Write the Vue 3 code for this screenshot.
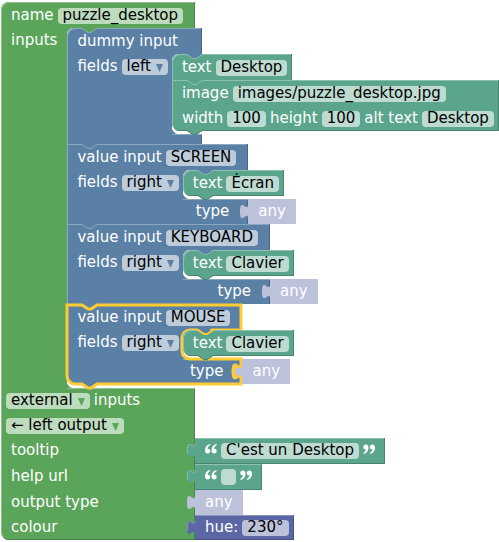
<script setup>
import { computed, onMounted, reactive, ref } from 'vue'

const blockName = ref('puzzle_desktop')
const inputsMode = ref('external')
const outputMode = ref('← left output')
const tooltip = ref("C'est un Desktop")
const helpUrl = ref('')
const hue = ref('230°')

const inputs = reactive([
  {
    kind: 'dummy input', name: null, align: 'left', selected: false,
    fields: [
      { kind: 'text', value: 'Desktop' },
      { kind: 'image', src: 'images/puzzle_desktop.jpg', width: '100', height: '100', alt: 'Desktop' },
    ],
  },
  { kind: 'value input', name: 'SCREEN', align: 'right', selected: false, fields: [{ kind: 'text', value: 'Écran' }] },
  { kind: 'value input', name: 'KEYBOARD', align: 'right', selected: false, fields: [{ kind: 'text', value: 'Clavier' }] },
  { kind: 'value input', name: 'MOUSE', align: 'right', selected: true, fields: [{ kind: 'text', value: 'Clavier' }] },
])

// Size of the selected block, from which its outline is traced.
const stack = ref(null)
const size = reactive({ w: 174, h: 80, slotX: 116, slotEnd: 55 })
onMounted(() => {
  const el = stack.value.querySelector('.selected')
  if (!el) return
  const side = el.querySelector('.side')
  size.w = el.offsetWidth
  size.h = el.offsetHeight
  size.slotX = side.offsetWidth
  size.slotEnd = side.offsetTop + side.offsetHeight
})
const outline = computed(() => {
  const { w, h, slotX: s, slotEnd: e } = size
  return `M0 1 H15 l6 4 h3 l6 -4 H${w - 1} V26 H${s + 30} l-6 4 h-3 l-6 -4 H${s + 8}`
    + ` a8 8 0 0 0 -8 8 V${e - 8} a8 8 0 0 0 8 8 H${w - 1} v5 c0 10 -8 -8 -8 7.5 s8 -2.5 8 7.5`
    + ` V${h} H30 l-6 4 h-3 l-6 -4 H8 a8 8 0 0 1 -8 -8 z`
})
</script>

<template>
  <main class="workspace">
    <section class="block root green">
      <div class="part top">
        <div class="row first">
          <label for="name">name</label>
          <span class="field"><input id="name" v-model="blockName" type="text"></span>
        </div>
      </div>

      <div class="middle">
        <div class="side">
          <div class="row"><span>inputs</span></div>
        </div>
        <div class="slot">
          <div ref="stack" class="stack">
            <section
              v-for="(input, i) in inputs" :key="i"
              class="block blue" :class="{ selected: input.selected }"
            >
              <svg class="notch" :class="i ? 'in-blue' : 'in-green'" width="17" height="6" viewBox="-1 0 17 6" aria-hidden="true">
                <path class="fill" d="M-1 0 H16 V1 H15 L9 5 H6 L0 1 H-1 z" />
                <path class="edge" d="M-1 .5 H0 L6 4.5 H9 L15 .5 H16" />
              </svg>
              <div class="part top">
                <div class="row first">
                  <label :for="input.name ? 'input' + i : 'align' + i">{{ input.kind }}</label>
                  <span v-if="input.name" class="field"><input :id="'input' + i" v-model="input.name" type="text"></span>
                </div>
              </div>
              <div class="middle">
                <div class="side">
                  <div class="row">
                    <label :for="'align' + i">fields</label>
                    <span class="field drop">
                      <select :id="'align' + i" v-model="input.align">
                        <option>{{ input.align }}</option>
                      </select>
                      <svg width="7" height="8" viewBox="0 0 7 8" aria-hidden="true"><path d="M0 0 H7 L3.5 8 z" /></svg>
                    </span>
                  </div>
                </div>
                <div class="slot">
                  <div class="stack">
                    <section v-for="(f, j) in input.fields" :key="j" class="block teal">
                      <svg class="notch" :class="j ? 'in-teal' : 'in-blue'" width="17" height="6" viewBox="-1 0 17 6" aria-hidden="true">
                        <path class="fill" d="M-1 0 H16 V1 H15 L9 5 H6 L0 1 H-1 z" />
                        <path v-if="input.selected" class="edge picked" d="M-1 0 H0 L6 4 H9 L15 0 H16" />
                        <path v-else class="edge" d="M-1 .5 H0 L6 4.5 H9 L15 .5 H16" />
                      </svg>
                      <div class="part leaf">
                        <div v-if="f.kind === 'text'" class="row first">
                          <label :for="`f${i}-${j}`">text</label>
                          <span class="field"><input :id="`f${i}-${j}`" v-model="f.value" type="text"></span>
                        </div>
                        <template v-else>
                          <div class="row first">
                            <label :for="`src${i}`">image</label>
                            <span class="field"><input :id="`src${i}`" v-model="f.src" type="text"></span>
                          </div>
                          <div class="row">
                            <label :for="`w${i}`">width</label>
                            <span class="field"><input :id="`w${i}`" v-model="f.width" type="text"></span>
                            <label :for="`h${i}`">height</label>
                            <span class="field"><input :id="`h${i}`" v-model="f.height" type="text"></span>
                            <label :for="`alt${i}`">alt text</label>
                            <span class="field"><input :id="`alt${i}`" v-model="f.alt" type="text"></span>
                          </div>
                        </template>
                      </div>
                      <svg v-if="j === input.fields.length - 1" class="bump" width="15" height="5" viewBox="0 0 15 5" aria-hidden="true">
                        <path class="fill" d="M0 -1 H15 V0 L9 4 H6 L0 0 z" />
                        <path class="edge" d="M0 -.5 L6 3.5 H9 L15 -.5" />
                      </svg>
                    </section>
                  </div>
                </div>
              </div>
              <div v-if="input.name" class="part type">
                <div class="row"><span>type</span></div>
                <div class="attach">
                  <div class="value any">
                    <svg class="tab" width="9" height="17" viewBox="-8 4 9 17" aria-hidden="true">
                      <path class="fill" d="M1 5 H0 c0 10 -8 -8 -8 7.5 s8 -2.5 8 7.5 H1 z" />
                      <path v-if="input.selected" class="edge picked" d="M-1 7 c-1 3 -7 -3 -7 5.500 c0 7 3 4 5 4.500" />
                    </svg>
                    <span>any</span>
                  </div>
                </div>
              </div>
              <div v-else class="part filler"></div>
              <svg v-if="i === inputs.length - 1" class="bump" width="15" height="5" viewBox="0 0 15 5" aria-hidden="true">
                <path class="fill" d="M0 0 H15 L9 4 H6 z" />
              </svg>
              <svg v-if="input.selected" class="outline" width="1" height="1" aria-hidden="true">
                <path :d="outline" />
              </svg>
            </section>
          </div>
        </div>
      </div>

      <div class="part last">
        <div class="row snug">
          <span class="field drop">
            <select id="mode" v-model="inputsMode"><option>{{ inputsMode }}</option></select>
            <svg width="7" height="8" viewBox="0 0 7 8" aria-hidden="true"><path d="M0 0 H7 L3.5 8 z" /></svg>
          </span>
          <label for="mode">inputs</label>
        </div>
        <div class="row snug">
          <span class="field drop">
            <select v-model="outputMode" aria-label="output"><option>{{ outputMode }}</option></select>
            <svg width="7" height="8" viewBox="0 0 7 8" aria-hidden="true"><path d="M0 0 H7 L3.5 8 z" /></svg>
          </span>
        </div>
        <div class="line tall">
          <div class="row"><label for="tooltip">tooltip</label></div>
          <div class="attach">
            <div class="value text teal">
              <svg class="tab" width="9" height="17" viewBox="-8 4 9 17" aria-hidden="true">
                <path class="fill" d="M1 5 H0 c0 10 -8 -8 -8 7.5 s8 -2.5 8 7.5 H1 z" />
                <path class="edge" d="M0 5.5 c0 9 -7.5 -7 -7.5 7 q0 2 .5 3" />
              </svg>
              <svg class="quote" width="12" height="10" viewBox="0 0 12 10" aria-hidden="true">
                <path d="M5 0 C2 .6 0 3 0 6 C0 8.500 1 9.500 2.700 9.500 C4.200 9.500 5.200 8.500 5.200 7.100 C5.200 5.700 4.300 4.800 3 4.800 C2.800 4.800 2.700 4.800 2.500 4.900 C2.700 3.300 3.600 1.800 5.300 1 z" />
                <path transform="translate(6.500 0)" d="M5 0 C2 .6 0 3 0 6 C0 8.500 1 9.500 2.700 9.500 C4.200 9.500 5.200 8.500 5.200 7.100 C5.200 5.700 4.300 4.800 3 4.800 C2.800 4.800 2.700 4.800 2.500 4.900 C2.700 3.300 3.600 1.800 5.300 1 z" />
              </svg>
              <span class="field"><input id="tooltip" v-model="tooltip" type="text"></span>
              <svg class="quote close" width="12" height="10" viewBox="0 0 12 10" aria-hidden="true">
                <path d="M5 0 C2 .6 0 3 0 6 C0 8.500 1 9.500 2.700 9.500 C4.200 9.500 5.200 8.500 5.200 7.100 C5.200 5.700 4.300 4.800 3 4.800 C2.800 4.800 2.700 4.800 2.500 4.900 C2.700 3.300 3.600 1.800 5.300 1 z" />
                <path transform="translate(6.500 0)" d="M5 0 C2 .6 0 3 0 6 C0 8.500 1 9.500 2.700 9.500 C4.200 9.500 5.200 8.500 5.200 7.100 C5.200 5.700 4.300 4.800 3 4.800 C2.800 4.800 2.700 4.800 2.500 4.900 C2.700 3.300 3.600 1.800 5.300 1 z" />
              </svg>
            </div>
          </div>
        </div>
        <div class="line tall">
          <div class="row"><label for="help">help url</label></div>
          <div class="attach">
            <div class="value text teal">
              <svg class="tab" width="9" height="17" viewBox="-8 4 9 17" aria-hidden="true">
                <path class="fill" d="M1 5 H0 c0 10 -8 -8 -8 7.5 s8 -2.5 8 7.5 H1 z" />
                <path class="edge" d="M0 5.5 c0 9 -7.5 -7 -7.5 7 q0 2 .5 3" />
              </svg>
              <svg class="quote" width="12" height="10" viewBox="0 0 12 10" aria-hidden="true">
                <path d="M5 0 C2 .6 0 3 0 6 C0 8.500 1 9.500 2.700 9.500 C4.200 9.500 5.200 8.500 5.200 7.100 C5.200 5.700 4.300 4.800 3 4.800 C2.800 4.800 2.700 4.800 2.500 4.900 C2.700 3.300 3.600 1.800 5.300 1 z" />
                <path transform="translate(6.500 0)" d="M5 0 C2 .6 0 3 0 6 C0 8.500 1 9.500 2.700 9.500 C4.200 9.500 5.200 8.500 5.200 7.100 C5.200 5.700 4.300 4.800 3 4.800 C2.800 4.800 2.700 4.800 2.500 4.900 C2.700 3.300 3.600 1.800 5.300 1 z" />
              </svg>
              <span class="field"><input id="help" v-model="helpUrl" type="text"></span>
              <svg class="quote close" width="12" height="10" viewBox="0 0 12 10" aria-hidden="true">
                <path d="M5 0 C2 .6 0 3 0 6 C0 8.500 1 9.500 2.700 9.500 C4.200 9.500 5.200 8.500 5.200 7.100 C5.200 5.700 4.300 4.800 3 4.800 C2.800 4.800 2.700 4.800 2.500 4.900 C2.700 3.300 3.600 1.800 5.300 1 z" />
                <path transform="translate(6.500 0)" d="M5 0 C2 .6 0 3 0 6 C0 8.500 1 9.500 2.700 9.500 C4.200 9.500 5.200 8.500 5.200 7.100 C5.200 5.700 4.300 4.800 3 4.800 C2.800 4.800 2.700 4.800 2.500 4.900 C2.700 3.300 3.600 1.800 5.300 1 z" />
              </svg>
            </div>
          </div>
        </div>
        <div class="line">
          <div class="row"><span>output type</span></div>
          <div class="attach">
            <div class="value any">
              <svg class="tab" width="9" height="17" viewBox="-8 4 9 17" aria-hidden="true">
                <path class="fill" d="M1 5 H0 c0 10 -8 -8 -8 7.5 s8 -2.5 8 7.5 H1 z" />
              </svg>
              <span>any</span>
            </div>
          </div>
        </div>
        <div class="line">
          <div class="row"><span>colour</span></div>
          <div class="attach">
            <div class="value indigo">
              <svg class="tab" width="9" height="17" viewBox="-8 4 9 17" aria-hidden="true">
                <path class="fill" d="M1 5 H0 c0 10 -8 -8 -8 7.5 s8 -2.5 8 7.5 H1 z" />
                <path class="edge" d="M0 5.5 c0 9 -7.5 -7 -7.5 7 q0 2 .5 3" />
              </svg>
              <label for="hue">hue:</label>
              <span class="field"><input id="hue" v-model="hue" type="text"></span>
            </div>
          </div>
        </div>
      </div>
    </section>
  </main>
</template>

<style>
body {
  background: #fff;
  overflow: hidden;
}
</style>

<style scoped>
.workspace {
  padding: 2px 0 0 1px;
  color: #fff;
  font: 15px/14px "DejaVu Sans", sans-serif;
  white-space: nowrap;
}

.green { --c: #5ba55b; --light: #8cc08c; --dark: #498449; }
.blue { --c: #5b80a5; --light: #8ca6c0; --dark: #496684; }
.teal { --c: #5ba58c; --light: #8cc0af; --dark: #498470; }
.indigo { --c: #5b67a5; --light: #8c95c0; --dark: #495284; }
.any { --c: #bdc2db; --light: #bdc2db; --dark: #bdc2db; }

.block {
  position: relative;
  display: flex;
  flex-direction: column;
  width: max-content;
}
.part,
.side {
  background: var(--c);
}
.part { box-shadow: inset -1px 0 var(--dark), inset 1px 0 var(--light); }
.side { box-shadow: inset 1px 0 var(--light); }
.part.top,
.part.leaf {
  box-shadow: inset -1px 0 var(--dark), inset 1px 1px var(--light);
}
.block:first-child > .part.top,
.block:first-child > .part.leaf {
  border-top-left-radius: 8px;
}
.block:last-child > .part.leaf {
  border-bottom-left-radius: 8px;
  box-shadow: inset -1px -1px var(--dark), inset 1px 1px var(--light);
}
.part.last {
  border-radius: 0 0 0 8px;
  box-shadow: inset -1px -1px var(--dark), inset 1px 0 var(--light);
}
.part.type {
  display: flex;
  justify-content: flex-end;
}
.part.type .row { padding-right: 19px; }
.part.filler { height: 10px; }
.blue:last-child > .part.type { border-radius: 0 0 0 8px; }

.row {
  display: flex;
  gap: 4px;
  height: 20px;
  padding: 5px 5px 0 10px;
}
.row.first { padding-top: 6px; }
.part.top .row { padding-right: 12px; }
.blue .side .row { padding-right: 4px; }
.row.snug { padding-left: 5px; }
.root > .middle > .side { padding-right: 5px; }

.middle { display: flex; }
.slot {
  position: relative;
  flex: 1 0 30px;
  width: 0;
  min-width: 30px;
  padding-bottom: 3px;
  background:
    radial-gradient(circle at 8px 8px, transparent 8px, var(--c) 9px) left top / 8px 8px no-repeat,
    radial-gradient(circle at 8px 0, transparent 8px, var(--c) 9px) left bottom / 8px 8px no-repeat;
  box-shadow: 0 1px var(--light);
}
.root > .middle > .slot { padding-bottom: 4px; }
.stack {
  position: relative;
  z-index: 2;
  width: 0;
}

.notch,
.bump {
  position: absolute;
  z-index: 1;
  overflow: visible;
}
.notch { top: 0; left: 14px; }
.bump { top: 100%; left: 15px; }
.notch .fill,
.bump .fill,
.tab .fill { fill: var(--c); }
.notch .edge {
  fill: none;
  stroke: var(--light);
}
.notch .picked,
.tab .picked {
  fill: none;
  stroke: #fc3;
  stroke-width: 2;
}
.bump .edge {
  fill: none;
  stroke: var(--dark);
}
.in-green .fill { fill: #5ba55b; }
.in-blue .fill { fill: #5b80a5; }
.in-teal .fill { fill: #5ba58c; }

.outline {
  position: absolute;
  z-index: 1;
  top: 0;
  left: 0;
  overflow: visible;
}
.outline path {
  fill: none;
  stroke: #fc3;
  stroke-width: 3;
}

.line {
  display: flex;
  justify-content: space-between;
  height: 25px;
}
.line.tall { height: 26px; }
.attach {
  position: relative;
  z-index: 2;
  width: 0;
}
.value {
  position: relative;
  display: flex;
  gap: 4px;
  width: max-content;
  height: 20px;
  padding: 5px 5px 0 10px;
  background: var(--c);
  box-shadow: inset -1px -1px var(--dark), inset 0 1px var(--light);
}
.value.text {
  height: 21px;
  padding-right: 10px;
}
.value.any { padding-right: 10px; }
.tab {
  position: absolute;
  top: 4px;
  left: -8px;
  overflow: visible;
}
.tab .edge {
  fill: none;
  stroke: var(--light);
}
.tab .picked { stroke: #fc3; }
.quote {
  margin-top: 1px;
  fill: #fff;
}
.quote.close { transform: rotate(180deg); }

.field {
  position: relative;
  display: flex;
  align-items: center;
  height: 16px;
  border-radius: 4px;
  background: rgba(255, 255, 255, .6);
}
.field input,
.field select {
  box-sizing: border-box;
  field-sizing: content;
  min-width: 15px;
  height: 20px;
  margin: -3px 0 -1px;
  padding: 0 5px;
  border: 0;
  outline: 0;
  appearance: none;
  background: transparent;
  color: #000;
  font: inherit;
  line-height: 20px;
}
.drop select { padding-right: 17px; }
.drop svg {
  position: absolute;
  top: 5px;
  right: 5px;
  fill: var(--c);
  pointer-events: none;
}
</style>
